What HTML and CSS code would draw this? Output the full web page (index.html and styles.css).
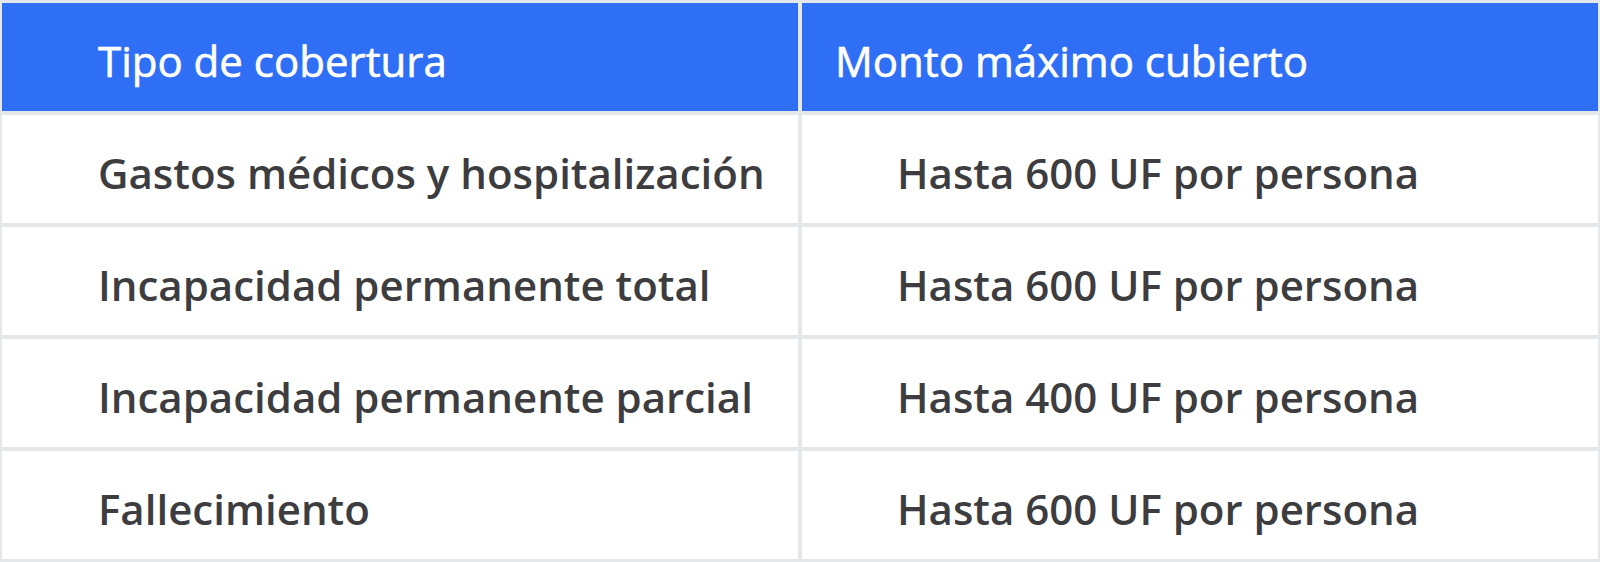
FILE: index.html
```html
<!DOCTYPE html>
<html lang="es">
<head>
<meta charset="utf-8">
<link rel="stylesheet" href="styles.css">
</head>
<body>
<div class="table">
  <div class="cell head first">Tipo de cobertura</div>
  <div class="cell head second">Monto máximo cubierto</div>
  <div class="cell first">Gastos médicos y hospitalización</div>
  <div class="cell second">Hasta 600 UF por persona</div>
  <div class="cell first">Incapacidad permanente total</div>
  <div class="cell second">Hasta 600 UF por persona</div>
  <div class="cell first">Incapacidad permanente parcial</div>
  <div class="cell second">Hasta 400 UF por persona</div>
  <div class="cell first">Fallecimiento</div>
  <div class="cell second">Hasta 600 UF por persona</div>
</div>
</body>
</html>
```

FILE: styles.css
```css
html, body {
  margin: 0;
  padding: 0;
  background: #e5e8ea;
}
.table {
  display: grid;
  grid-template-columns: 796px 796px;
  grid-auto-rows: 108px;
  gap: 4px;
  padding: 3px 2px;
  background: #e5e8ea;
  font-family: "Open Sans", Lato, sans-serif;
}
.cell {
  display: flex;
  align-items: center;
  padding-left: 96px;
  padding-top: 6px;
  box-sizing: border-box;
  background: #ffffff;
  color: #3d3d3f;
  font-size: 42px;
  font-weight: 600;
  white-space: nowrap;
}
.cell.second {
  padding-left: 95px;
}
.cell.head {
  background: #2f6ff5;
  color: #ffffff;
  font-weight: 500;
  -webkit-text-stroke: 0.6px #ffffff;
}
.cell.head.second {
  padding-left: 33px;
}
```
